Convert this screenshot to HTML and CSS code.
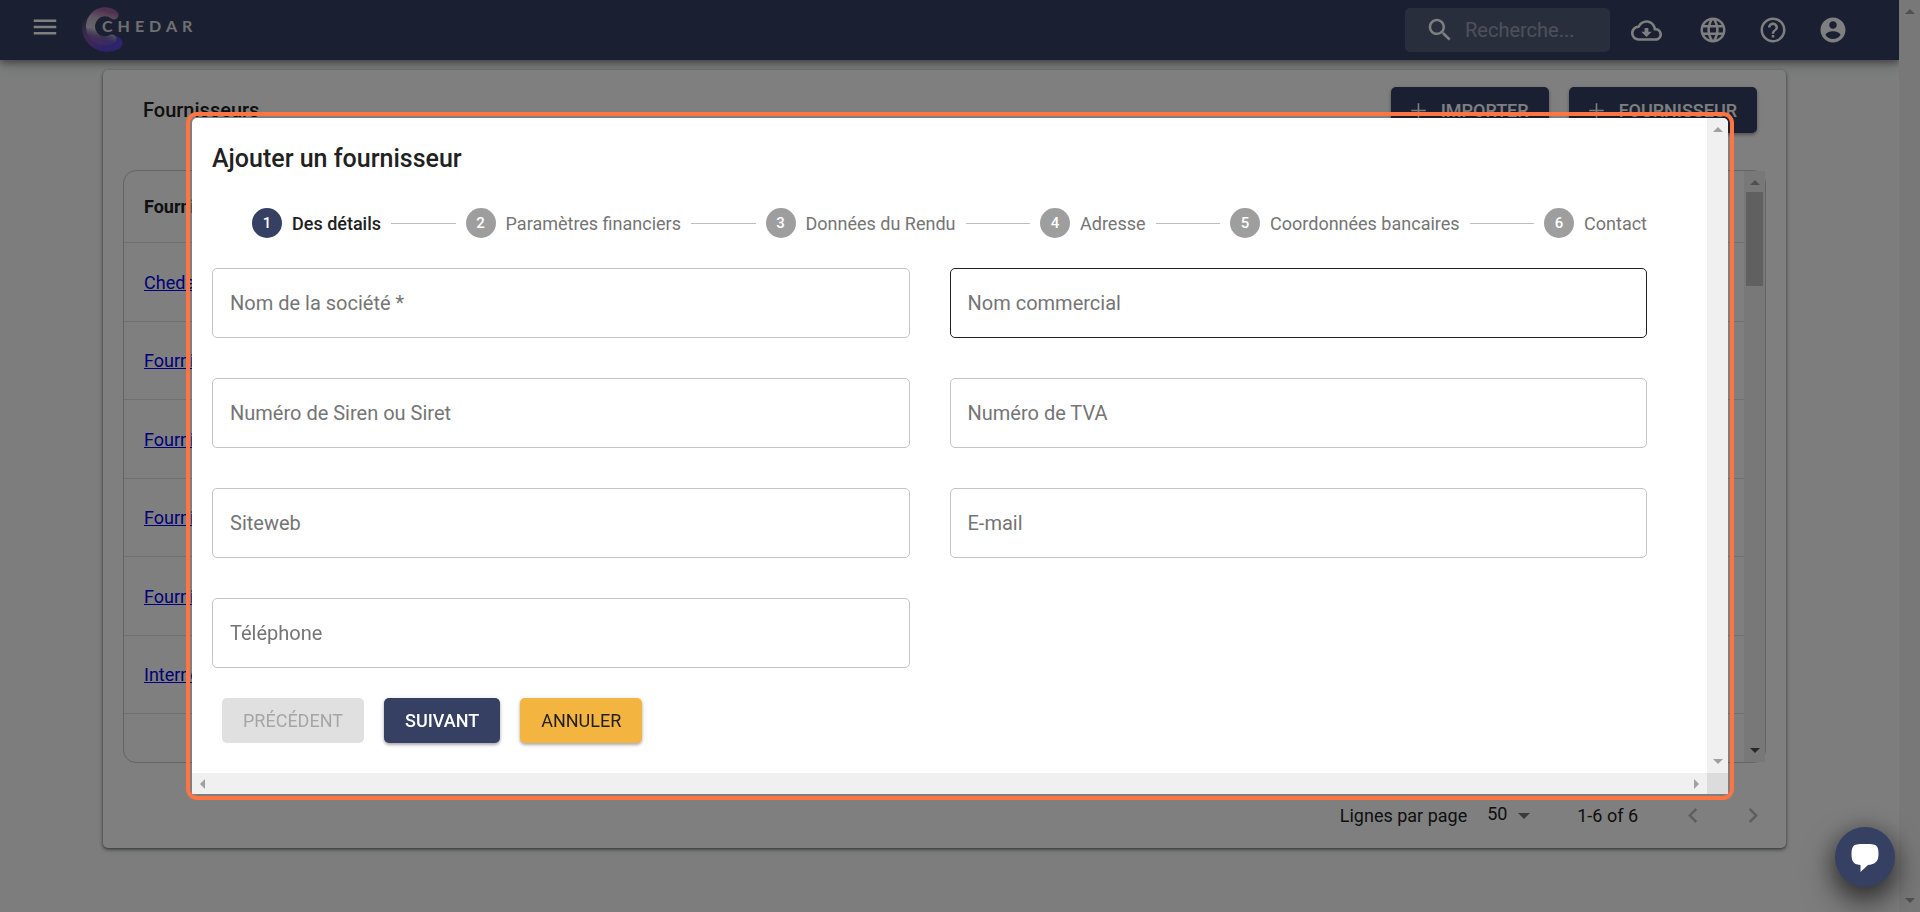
FILE: index.html
```html
<!DOCTYPE html>
<html lang="fr">
<head>
<meta charset="utf-8">
<title>Chedar - Fournisseurs</title>
<link rel="stylesheet" href="styles.css">
</head>
<body>
<div class="app">
  <div class="page">
    <header class="appbar">
      <button class="icon-btn menu-btn" type="button" aria-label="Menu">
        <svg width="30" height="30" viewBox="0 0 24 24"><path d="M3 18h18v-2H3v2zm0-5h18v-2H3v2zm0-7v2h18V6H3z"/></svg>
      </button>
      <a class="logo" href="#">
        <svg class="logo-mark" width="50" height="52" viewBox="0 0 50 52" aria-hidden="true">
          <defs>
            <linearGradient id="ring" x1="0.3" y1="0" x2="0.8" y2="1">
              <stop offset="0" stop-color="#9a68b8" stop-opacity="0"/>
              <stop offset="0.4" stop-color="#8a5aa8" stop-opacity="0.8"/>
              <stop offset="0.7" stop-color="#7a4cb4"/>
              <stop offset="1" stop-color="#5a48d8"/>
            </linearGradient>
            <linearGradient id="core" x1="0.9" y1="0" x2="0.7" y2="1">
              <stop offset="0" stop-color="#a060a0"/>
              <stop offset="0.35" stop-color="#c0b4cc"/>
              <stop offset="0.7" stop-color="#cfcad8"/>
              <stop offset="1" stop-color="#8878c8" stop-opacity="0.3"/>
            </linearGradient>
          </defs>
          <path d="M21 10A18 18 0 1 0 39 43" fill="none" stroke="url(#ring)" stroke-width="13" stroke-linecap="round"/>
          <path d="M37 15A14.500 14.500 0 1 0 35 39" fill="none" stroke="url(#core)" stroke-width="9" stroke-linecap="round"/>
        </svg>
        <span class="logo-text">CHEDAR</span>
      </a>
      <label class="search">
        <svg width="30" height="30" viewBox="0 0 24 24" aria-hidden="true"><path d="M15.5 14h-.79l-.28-.27C15.41 12.59 16 11.11 16 9.5 16 5.91 13.09 3 9.5 3S3 5.91 3 9.5 5.91 16 9.5 16c1.61 0 3.09-.59 4.23-1.57l.27.28v.79l5 4.99L20.49 19l-4.99-5zm-6 0C7.01 14 5 11.99 5 9.5S7.01 5 9.5 5 14 7.01 14 9.5 11.99 14 9.5 14z"/></svg>
        <input type="search" placeholder="Recherche..." aria-label="Recherche">
      </label>
      <nav class="actions">
        <button class="icon-btn" type="button" aria-label="Télécharger">
          <svg width="31" height="31" viewBox="0 0 24 24"><path d="M19.35 10.04C18.67 6.59 15.64 4 12 4 9.11 4 6.6 5.64 5.35 8.04 2.34 8.36 0 10.91 0 14c0 3.31 2.69 6 6 6h13c2.76 0 5-2.24 5-5 0-2.64-2.05-4.78-4.65-4.96zM19 18H6c-2.21 0-4-1.79-4-4 0-2.05 1.53-3.76 3.56-3.97l1.07-.11.5-.95C8.08 7.14 9.94 6 12 6c2.62 0 4.88 1.86 5.39 4.43l.3 1.5 1.53.11c1.56.1 2.78 1.41 2.78 2.96 0 1.65-1.35 3-3 3zm-5.55-8h-2.9v3H8l4 4 4-4h-2.55z"/></svg>
        </button>
        <button class="icon-btn" type="button" aria-label="Langue">
          <svg width="30" height="30" viewBox="0 0 24 24"><path d="M11.99 2C6.47 2 2 6.48 2 12s4.47 10 9.99 10C17.52 22 22 17.52 22 12S17.52 2 11.99 2zm6.93 6h-2.95c-.32-1.25-.78-2.45-1.38-3.56 1.84.63 3.37 1.91 4.33 3.56zM12 4.04c.83 1.2 1.48 2.53 1.91 3.96h-3.82c.43-1.43 1.08-2.76 1.91-3.96zM4.26 14C4.1 13.36 4 12.69 4 12s.1-1.36.26-2h3.38c-.08.66-.14 1.32-.14 2 0 .68.06 1.34.14 2H4.26zm.82 2h2.95c.32 1.25.78 2.45 1.38 3.56-1.84-.63-3.37-1.9-4.33-3.56zm2.95-8H5.08c.96-1.66 2.49-2.93 4.33-3.56C8.81 5.55 8.35 6.75 8.03 8zM12 19.96c-.83-1.2-1.48-2.53-1.91-3.96h3.82c-.43 1.43-1.08 2.76-1.91 3.96zM14.34 14H9.66c-.09-.66-.16-1.32-.16-2 0-.68.07-1.35.16-2h4.68c.09.65.16 1.32.16 2 0 .68-.07 1.34-.16 2zm.25 5.56c.6-1.11 1.06-2.31 1.38-3.56h2.95c-.96 1.65-2.49 2.93-4.33 3.56zM16.36 14c.08-.66.14-1.32.14-2 0-.68-.06-1.34-.14-2h3.38c.16.64.26 1.31.26 2s-.1 1.36-.26 2h-3.38z"/></svg>
        </button>
        <button class="icon-btn" type="button" aria-label="Aide">
          <svg width="30" height="30" viewBox="0 0 24 24"><path d="M11 18h2v-2h-2v2zm1-16C6.48 2 2 6.48 2 12s4.48 10 10 10 10-4.48 10-10S17.52 2 12 2zm0 18c-4.41 0-8-3.59-8-8s3.59-8 8-8 8 3.59 8 8-3.59 8-8 8zm0-14c-2.21 0-4 1.79-4 4h2c0-1.1.9-2 2-2s2 .9 2 2c0 2-3 1.75-3 5h2c0-2.25 3-2.5 3-5 0-2.21-1.79-4-4-4z"/></svg>
        </button>
        <button class="icon-btn" type="button" aria-label="Compte">
          <svg width="30" height="30" viewBox="0 0 24 24"><path d="M12 2C6.48 2 2 6.48 2 12s4.48 10 10 10 10-4.48 10-10S17.52 2 12 2zm0 3c1.66 0 3 1.34 3 3s-1.34 3-3 3-3-1.34-3-3 1.34-3 3-3zm0 14.2c-2.5 0-4.71-1.28-6-3.22.03-1.99 4-3.08 6-3.08 1.99 0 5.97 1.09 6 3.08-1.29 1.94-3.5 3.22-6 3.22z"/></svg>
        </button>
      </nav>
    </header>

    <main class="content">
      <section class="card">
        <div class="toolbar">
          <h1 class="card-title">Fournisseurs</h1>
          <div class="toolbar-actions">
            <button class="btn btn-primary btn-tall" type="button">
              <svg width="25" height="25" viewBox="0 0 24 24" aria-hidden="true"><path d="M19 12.75h-6.25V19h-1.5v-6.25H5v-1.5h6.25V5h1.5v6.25H19z"/></svg>IMPORTER</button>
            <button class="btn btn-primary btn-tall" type="button">
              <svg width="25" height="25" viewBox="0 0 24 24" aria-hidden="true"><path d="M19 12.75h-6.25V19h-1.5v-6.25H5v-1.5h6.25V5h1.5v6.25H19z"/></svg>FOURNISSEUR</button>
          </div>
        </div>
        <div class="table-box">
          <div class="table-scroll">
            <table class="table">
              <thead><tr><th>Fournisseur</th></tr></thead>
              <tbody>
                <tr><td><a href="#">Chedar</a></td></tr>
                <tr><td><a href="#">Fournisseur</a></td></tr>
                <tr><td><a href="#">Fournisseur</a></td></tr>
                <tr><td><a href="#">Fournisseur</a></td></tr>
                <tr><td><a href="#">Fournisseur</a></td></tr>
                <tr><td><a href="#">Interne</a></td></tr>
              </tbody>
            </table>
          </div>
          <div class="vbar vbar-table">
            <svg class="arrow-up" width="10" height="5" viewBox="0 0 10 5"><path d="M0 5L5 0l5 5z"/></svg>
            <div class="thumb"></div>
            <svg class="arrow-down" width="10" height="5" viewBox="0 0 10 5"><path d="M0 0h10L5 5z"/></svg>
          </div>
        </div>
        <div class="pagination">
          <label for="rows">Lignes par page</label>
          <div class="select-wrap">
            <select id="rows" class="rows"><option>50</option></select>
            <svg width="12" height="6" viewBox="0 0 12 6" aria-hidden="true"><path d="M0 0h12L6 6z"/></svg>
          </div>
          <span class="range">1-6 of 6</span>
          <button class="pager" type="button" aria-label="Page précédente" disabled><svg width="30" height="30" viewBox="0 0 24 24"><path d="M15.41 16.09l-4.58-4.59 4.58-4.59L14 5.5l-6 6 6 6z"/></svg></button>
          <button class="pager" type="button" aria-label="Page suivante" disabled><svg width="30" height="30" viewBox="0 0 24 24"><path d="M8.59 16.09l4.58-4.59-4.58-4.59L10 5.5l6 6-6 6z"/></svg></button>
        </div>
      </section>
    </main>
  </div>
  <div class="vbar vbar-page">
    <svg width="10" height="5" viewBox="0 0 10 5"><path d="M0 5L5 0l5 5z"/></svg>
    <svg width="10" height="5" viewBox="0 0 10 5"><path d="M0 0h10L5 5z"/></svg>
  </div>
</div>

<div class="overlay">
  <div class="dialog" role="dialog" aria-labelledby="dlg-title">
    <form class="dialog-body">
      <h2 class="dialog-title" id="dlg-title">Ajouter un fournisseur</h2>
      <ol class="stepper">
        <li class="step step-active"><span class="dot">1</span><span>Des détails</span></li>
        <li class="line" role="presentation"></li>
        <li class="step"><span class="dot">2</span><span>Paramètres financiers</span></li>
        <li class="line" role="presentation"></li>
        <li class="step"><span class="dot">3</span><span>Données du Rendu</span></li>
        <li class="line" role="presentation"></li>
        <li class="step"><span class="dot">4</span><span>Adresse</span></li>
        <li class="line" role="presentation"></li>
        <li class="step"><span class="dot">5</span><span>Coordonnées bancaires</span></li>
        <li class="line" role="presentation"></li>
        <li class="step"><span class="dot">6</span><span>Contact</span></li>
      </ol>
      <div class="fields">
        <div class="field"><input id="f1" type="text" required><label for="f1">Nom de la société *</label></div>
        <div class="field field-hover"><input id="f2" type="text"><label for="f2">Nom commercial</label></div>
        <div class="field"><input id="f3" type="text"><label for="f3">Numéro de Siren ou Siret</label></div>
        <div class="field"><input id="f4" type="text"><label for="f4">Numéro de TVA</label></div>
        <div class="field"><input id="f5" type="text"><label for="f5">Siteweb</label></div>
        <div class="field"><input id="f6" type="email"><label for="f6">E-mail</label></div>
        <div class="field"><input id="f7" type="tel"><label for="f7">Téléphone</label></div>
      </div>
      <div class="form-actions">
        <button class="btn btn-disabled" type="button" disabled>PRÉCÉDENT</button>
        <button class="btn btn-primary" type="button">SUIVANT</button>
        <button class="btn btn-warning" type="button">ANNULER</button>
      </div>
    </form>
    <div class="vbar vbar-dialog">
      <svg width="10" height="5" viewBox="0 0 10 5"><path d="M0 5L5 0l5 5z"/></svg>
      <svg width="10" height="5" viewBox="0 0 10 5"><path d="M0 0h10L5 5z"/></svg>
    </div>
    <div class="hbar">
      <svg width="5" height="10" viewBox="0 0 5 10"><path d="M5 0v10L0 5z"/></svg>
      <svg width="5" height="10" viewBox="0 0 5 10"><path d="M0 0v10l5-5z"/></svg>
    </div>
    <div class="corner"></div>
  </div>
</div>

<button class="chat" type="button" aria-label="Chat">
  <svg width="28" height="30" viewBox="0 0 28 30"><path d="M14 0C22 0 24 .5 25.500 2 27 3.500 27.500 6 27.500 9.500S27 16 25.500 17.500C24 19 22 20.500 17 21L9.500 28V21C5 20.500 3.500 19.500 2.300 18 1 16.500.5 13.500.5 10S1 3.500 2.500 2C4 .5 6 0 14 0z"/></svg>
</button>
</body>
</html>
```
FILE: styles.css
```css
* {
  box-sizing: border-box;
}

body {
  margin: 0;
  font-family: Roboto, "Liberation Sans", sans-serif;
  font-size: 18px;
  color: #212121;
  background: #f8fbf9;
}

button,
input,
select {
  font: inherit;
}

svg {
  display: block;
  flex: none;
  fill: currentColor;
}

.app {
  display: flex;
  min-height: 100vh;
}

.page {
  flex: 1;
  min-width: 0;
}

/* App bar */
.appbar {
  display: flex;
  align-items: center;
  height: 60px;
  padding: 0 51px 0 30px;
  color: #fff;
  background: #354063;
  box-shadow: 0 3px 6px rgba(0, 0, 0, 0.3), 0 5px 12px rgba(0, 0, 0, 0.2);
}

.icon-btn {
  display: flex;
  padding: 0;
  border: 0;
  color: inherit;
  background: none;
}

.menu-btn {
  padding-bottom: 6px;
}

.logo {
  display: flex;
  align-items: center;
  height: 60px;
  margin-left: 17px;
  margin-right: auto;
  padding-bottom: 8px;
  color: #e0e0e0;
  text-decoration: none;
}

.logo-text {
  margin-left: -25px;
  padding-bottom: 2px;
  font-family: Lato, Roboto, sans-serif;
  font-size: 16px;
  font-weight: 700;
  letter-spacing: 5px;
}

.search {
  display: flex;
  align-items: center;
  width: 205px;
  height: 44px;
  padding-left: 20px;
  border-radius: 5px;
  background: rgba(255, 255, 255, 0.15);
}

.search input {
  width: 100%;
  min-width: 0;
  padding: 0 0 0 10px;
  border: 0;
  outline: 0;
  font-size: 20px;
  color: #fff;
  background: none;
}

.search input::placeholder {
  color: #fff;
  opacity: 0.42;
}

.actions {
  display: flex;
  align-items: center;
  gap: 30px;
  margin-left: 21px;
}

.actions .icon-btn:first-child {
  margin-right: 6px;
}

/* Supplier list */
.content {
  padding: 10px 113px 0 103px;
}

.card {
  border-radius: 5px;
  background: #fff;
  box-shadow: 0 1px 3px rgba(0, 0, 0, 0.4), 0 2px 4px rgba(0, 0, 0, 0.3);
}

.toolbar {
  display: flex;
  align-items: center;
  justify-content: space-between;
  padding: 17px 29px 37px 40px;
}

.toolbar-actions {
  display: flex;
  gap: 20px;
}

.card-title {
  margin: 0;
  font-size: 20px;
  font-weight: 500;
}

.table-box {
  display: flex;
  margin: 0 20px;
  border: 1px solid #c8c8d0;
  border-radius: 13px;
}

.table-scroll {
  flex: 1;
  padding-bottom: 48px;
}

.table {
  width: 100%;
  border-spacing: 0;
}

.table th,
.table td {
  height: 78px;
  padding: 0 20px;
  text-align: left;
  border-bottom: 1px solid #e0e0e0;
}

.table th {
  height: 72px;
  font-weight: 700;
}

.table tbody tr:nth-child(odd) td {
  height: 79px;
}

.table a {
  color: #0000ee;
}

.pagination {
  display: flex;
  align-items: center;
  justify-content: flex-end;
  height: 85px;
  padding: 20px 18px 0 0;
}

.select-wrap {
  display: flex;
  align-items: center;
  gap: 10px;
  margin-left: 20px;
  color: #757575;
}

.rows {
  appearance: none;
  padding: 0 0 4px;
  border: 0;
  color: #212121;
  background: none;
}

.range {
  margin: 0 40px 0 47px;
}

.pager {
  display: flex;
  padding: 0;
  border: 0;
  color: #bdbdbd;
  background: none;
}

.pager + .pager {
  margin-left: 30px;
}

/* Scroll tracks */
.vbar {
  display: flex;
  flex-direction: column;
  align-items: center;
  justify-content: space-between;
  flex: none;
  width: 21px;
  padding: 9px 0;
  color: #a0a0a0;
  background: #f0f0f0;
}

.vbar-page {
  min-height: 100vh;
}

.vbar-table .thumb {
  width: 17px;
  height: 94px;
  margin: 7px 0 auto;
  background: #c0c0c0;
}

.vbar-table .arrow-down {
  color: #505050;
}

/* Dialog */
.overlay {
  position: fixed;
  inset: 0;
  display: grid;
  place-items: center;
  background: rgba(0, 0, 0, 0.5);
}

.dialog {
  display: grid;
  grid-template-columns: 1fr 21px;
  width: 80%;
  border-radius: 5px;
  outline: 4px solid #ff7441;
  outline-offset: 2px;
  background: #fff;
}

.dialog-body {
  padding: 26px 60px 30px 20px;
}

.dialog-title {
  margin: 0;
  font-size: 25px;
  font-weight: 500;
  line-height: 30px;
}

.stepper {
  display: flex;
  align-items: center;
  gap: 10px;
  margin: 34px 0 30px;
  padding: 0 0 0 40px;
  list-style: none;
}

.step {
  display: flex;
  align-items: center;
  gap: 10px;
  color: #757575;
  white-space: nowrap;
}

.step-active {
  font-weight: 500;
  color: #212121;
}

.dot {
  display: grid;
  place-items: center;
  width: 30px;
  height: 30px;
  border-radius: 50%;
  font-size: 15px;
  font-weight: 500;
  color: #fff;
  background: #9e9e9e;
}

.step-active .dot {
  background: #354063;
}

.line {
  flex: 1;
  height: 1px;
  background: #bdbdbd;
}

.fields {
  display: grid;
  grid-template-columns: 1fr 1fr;
  gap: 40px;
}

.field {
  display: grid;
  align-items: center;
  height: 70px;
}

.field > * {
  grid-area: 1 / 1;
}

.field label {
  justify-self: start;
  padding-left: 18px;
  font-size: 20px;
  color: #757575;
}

.field input {
  width: 100%;
  height: 100%;
  padding: 0 18px;
  border: 1px solid #c4c4c4;
  border-radius: 5px;
  outline: 0;
  background: none;
}

.field-hover input {
  border-color: #212121;
}

.form-actions {
  display: flex;
  gap: 20px;
  padding: 30px 10px 0;
}

.btn {
  display: flex;
  align-items: center;
  justify-content: center;
  gap: 10px;
  height: 45px;
  padding: 0 21px;
  border: 0;
  border-radius: 5px;
  box-shadow: 0 2px 3px rgba(0, 0, 0, 0.25), 0 1px 5px rgba(0, 0, 0, 0.15);
}

.btn-tall {
  height: 46px;
  padding: 0 20px 0 15px;
}

.btn-primary {
  font-weight: 500;
  color: #fff;
  background: #354063;
}

.btn-warning {
  color: #212121;
  background: #f4b440;
}

.btn-disabled {
  color: #a6a6a6;
  background: #e0e0e0;
  box-shadow: none;
}

.vbar-dialog {
  border-top-right-radius: 5px;
}

.hbar {
  display: flex;
  align-items: center;
  justify-content: space-between;
  height: 21px;
  padding: 0 8px;
  color: #a0a0a0;
  background: #f0f0f0;
}

.corner {
  background: #dcdcdc;
}

/* Chat launcher */
.chat {
  position: fixed;
  right: 25px;
  bottom: 25px;
  display: grid;
  place-items: center;
  width: 60px;
  height: 60px;
  padding: 4px 0 0;
  border: 0;
  border-radius: 50%;
  color: #fff;
  background: #354063;
  box-shadow: 0 16px 32px rgba(0, 0, 0, 0.5), 0 4px 24px rgba(0, 0, 0, 0.4);
}
```
